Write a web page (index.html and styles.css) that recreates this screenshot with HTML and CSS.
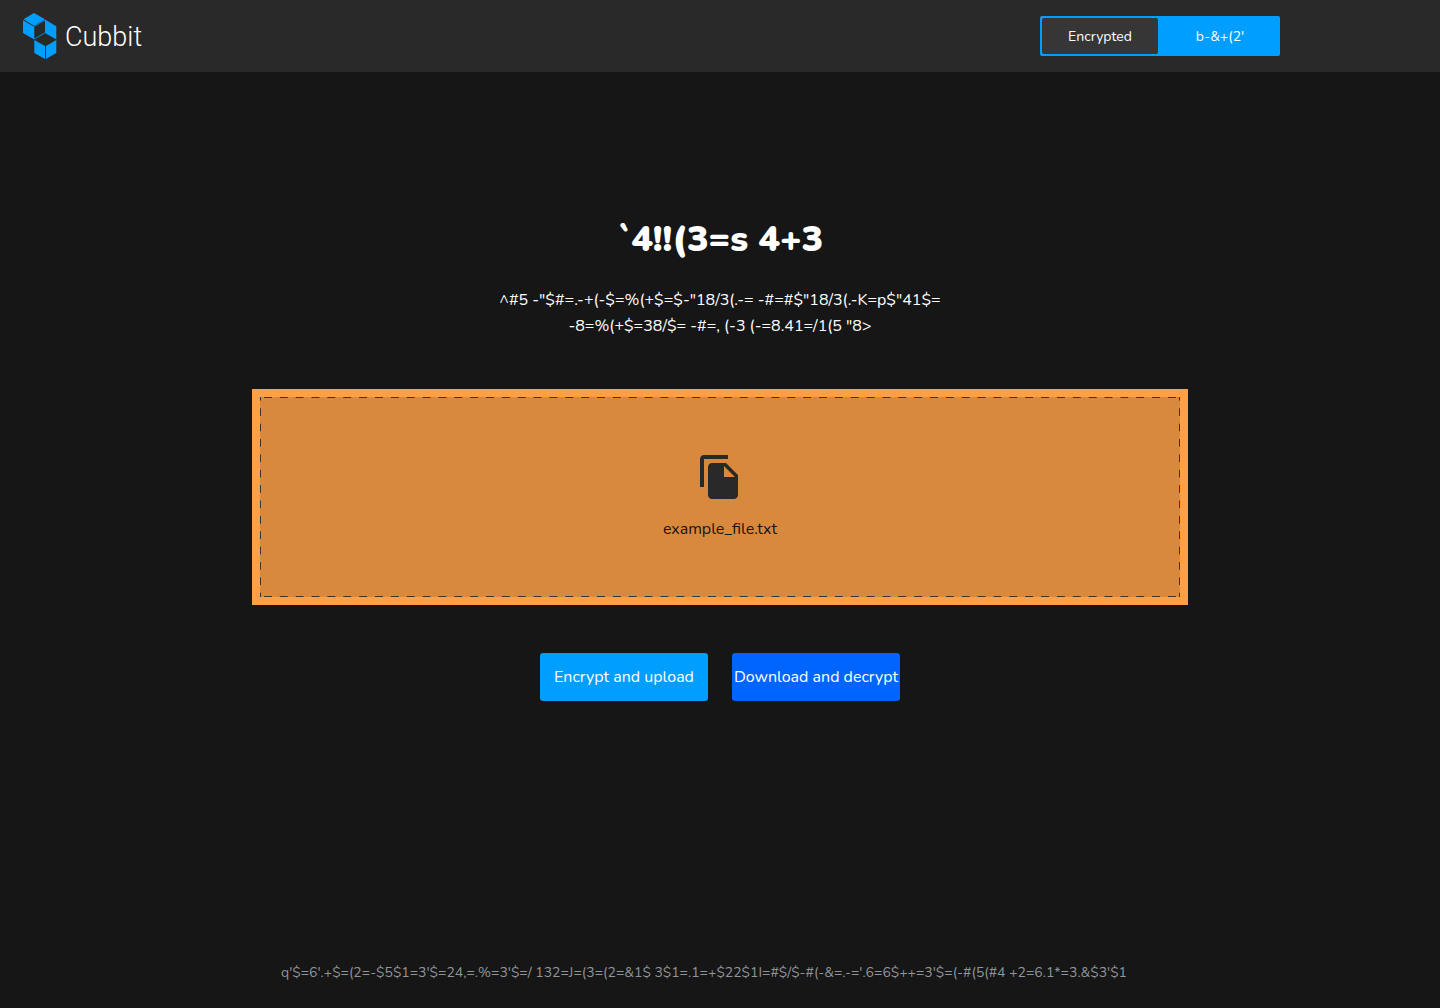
FILE: index.html
```html
<!DOCTYPE html>
<html lang="en">
<head>
<meta charset="utf-8">
<meta name="viewport" content="width=device-width, initial-scale=1">
<title>Cubbit Vault</title>
<link rel="stylesheet" href="styles.css">
</head>
<body>
<header class="topbar">
  <a class="brand" href="#">
    <svg class="brand-mark" viewBox="0 0 34 48" aria-hidden="true">
      <path d="M11 1 22 7.300 11 13.800 0.500 7.300Z"/>
      <path d="M0 8.200 11.300 14.800V27.500L0 21Z"/>
      <path d="M22 7.500 33.300 14.300V27.500L22 21Z"/>
      <path d="M11.300 28 22 34V47L11.300 41Z"/>
      <path d="M33.300 28V41L23 47V34Z"/>
      <path class="mark-line" d="M11.300 27 22.300 20.700M11.300 14.300 22.300 8"/>
    </svg>
    <span class="brand-name">Cubbit</span>
  </a>
  <div class="toggle">
    <button class="toggle-option selected" type="button" aria-pressed="true">Encrypted</button>
    <button class="toggle-option" type="button" aria-pressed="false">b-&amp;+(2'</button>
  </div>
</header>
<main class="content">
  <h1 class="title">`4!!(3=s 4+3</h1>
  <p class="intro">^#5 -"$#=.-+(-$=%(+$=$-"18/3(.-= -#=#$"18/3(.-K=p$"41$=<br>-8=%(+$=38/$= -#=, (-3 (-=8.41=/1(5 "8&gt;</p>
  <section class="dropzone">
    <div class="dropzone-inner">
      <svg class="file-icon" viewBox="0 0 24 24" aria-hidden="true"><path d="M16 1H4c-1.100 0-2 .9-2 2v14h2V3h12V1zm-1 4 6 6v10c0 1.100-.9 2-2 2H7.990C6.890 23 6 22.100 6 21l.01-14c0-1.100.89-2 1.990-2h7zm-1 7h5.500L14 6.500V12z"/></svg>
      <span class="file-name">example_file.txt</span>
    </div>
  </section>
  <div class="actions">
    <button class="action upload" type="button">Encrypt and upload</button>
    <button class="action download" type="button">Download and decrypt</button>
  </div>
</main>
<footer class="footer">q'$=6'.+$=(2=-$5$1=3'$=24,=.%=3'$=/ 132=J=(3=(2=&amp;1$ 3$1=.1=+$22$1I=#$/$-#(-&amp;=.-='.6=6$++=3'$=(-#(5(#4 +2=6.1*=3.&amp;$3'$1</footer>
</body>
</html>
```
FILE: styles.css
```css
* { box-sizing: border-box; }
body {
  margin: 0;
  min-height: 100vh;
  display: flex;
  flex-direction: column;
  background: #161616;
  color: #fff;
  font-family: Nunito, "Open Sans", sans-serif;
  font-size: 16px;
  font-weight: 400;
}
button { border: 0; font: inherit; color: inherit; cursor: pointer; }
.topbar {
  height: 72px;
  padding: 0 160px 0 23px;
  display: flex;
  align-items: center;
  justify-content: space-between;
  background: #292929;
}
.brand {
  display: flex;
  align-items: center;
  gap: 8px;
  color: #fff;
  text-decoration: none;
}
.brand-mark { width: 34px; height: 48px; fill: #009eff; }
.mark-line { fill: none; stroke: #009eff; stroke-width: 0.8; }
.brand-name { padding-top: 2px; font-family: Roboto, sans-serif; font-weight: 300; font-size: 27px; }
.toggle {
  width: 240px;
  height: 40px;
  padding: 2px;
  display: grid;
  grid-template-columns: 1fr 1fr;
  gap: 4px;
  border-radius: 2px;
  background: #009eff;
}
.toggle-option {
  padding: 0;
  border-radius: 2px;
  background: transparent;
  font-size: 14px;
}
.toggle-option.selected { background: #363636; }
.content {
  flex: 1;
  padding: 144px 24px 24px;
  display: flex;
  flex-direction: column;
  align-items: center;
}
.title { margin: 0; font-size: 36px; line-height: 48px; font-weight: 900; }
.intro { margin: 23px 0 50px; line-height: 26px; text-align: center; }
.dropzone {
  width: 100%;
  max-width: 936px;
  padding: 8px;
  background: #ffa047;
}
.dropzone-inner {
  --dash: #363636 4px, transparent 4px 12px, #363636 12px;
  min-height: 200px;
  display: flex;
  flex-direction: column;
  align-items: center;
  justify-content: center;
  gap: 16px;
  background:
    linear-gradient(90deg, var(--dash)) top / 16px 1px round no-repeat,
    linear-gradient(90deg, var(--dash)) bottom / 16px 1px round no-repeat,
    linear-gradient(var(--dash)) left / 1px 16px no-repeat round,
    linear-gradient(var(--dash)) right / 1px 16px no-repeat round,
    #d9893d;
  color: #161616;
}
.file-icon { width: 48px; height: 48px; fill: #292929; }
.file-name { line-height: 24px; }
.actions { margin-top: 48px; display: flex; gap: 24px; }
.action {
  width: 168px;
  height: 48px;
  padding: 0;
  border-radius: 3px;
  white-space: nowrap;
}
.upload { background: #009eff; }
.download { background: #0065ff; }
.footer {
  padding: 0 56px 24px 24px;
  color: #919499;
  font-size: 14px;
  line-height: 22px;
  text-align: center;
}
```
